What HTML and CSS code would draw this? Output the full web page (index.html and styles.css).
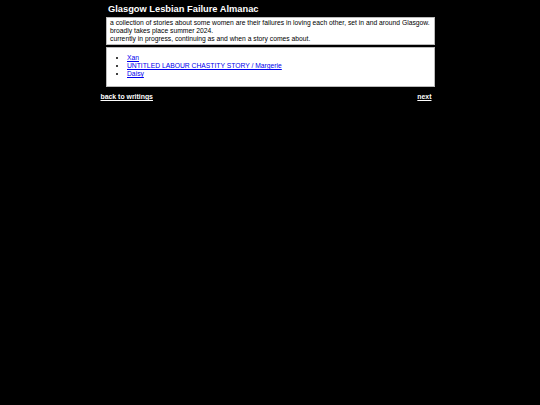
FILE: index.html
```html
<!DOCTYPE html>
<html>
<head>
<meta charset="utf-8">
<link rel="stylesheet" href="styles.css">
</head>
<body>
<div class="wrap">
  <h1 class="title">Glasgow Lesbian Failure Almanac</h1>
  <div class="box intro">
    a collection of stories about some women are their failures in loving each other, set in and around Glasgow.<br>
    broadly takes place summer 2024.<br>
    currently in progress, continuing as and when a story comes about.
  </div>
  <div class="box list">
    <ul>
      <li><a href="#">Xan</a></li>
      <li><a href="#">UNTITLED LABOUR CHASTITY STORY / Margerie</a></li>
      <li><a href="#">Daisy</a></li>
    </ul>
  </div>
</div>
<div class="nav">
  <a href="#" class="navlink">back to writings</a>
  <a href="#" class="navlink">next</a>
</div>
</body>
</html>
```
FILE: styles.css
```css
html, body {
  margin: 0;
  padding: 0;
  background: #000;
}
body {
  font-family: "Liberation Sans", Arial, sans-serif;
  color: #000;
}
.wrap {
  width: 329px;
  margin: 0 auto;
  padding-left: 1px;
}
.title {
  margin: 0;
  padding: 3px 0 0 2px;
  height: 13px;
  font-size: 9.3px;
  line-height: 12px;
  color: #fff;
  font-weight: bold;
}
.box {
  background: #fff;
  border: 1px solid #bbb;
  margin-top: 1px;
  font-size: 6.75px;
  line-height: 8px;
}
.intro {
  padding: 1px 3px 1px 3px;
}
.list {
  margin-top: 2px;
  padding: 6px 3px 8px 3px;
}
.list ul {
  margin: 0;
  padding-left: 17px;
}
.list a {
  color: #00e;
}
.nav {
  width: 331px;
  margin: 6px auto 0;
  display: flex;
  justify-content: space-between;
  font-size: 6.9px;
  line-height: 8px;
  font-weight: bold;
  transform: translateX(-4px);
}
.navlink {
  color: #fff;
}
```
